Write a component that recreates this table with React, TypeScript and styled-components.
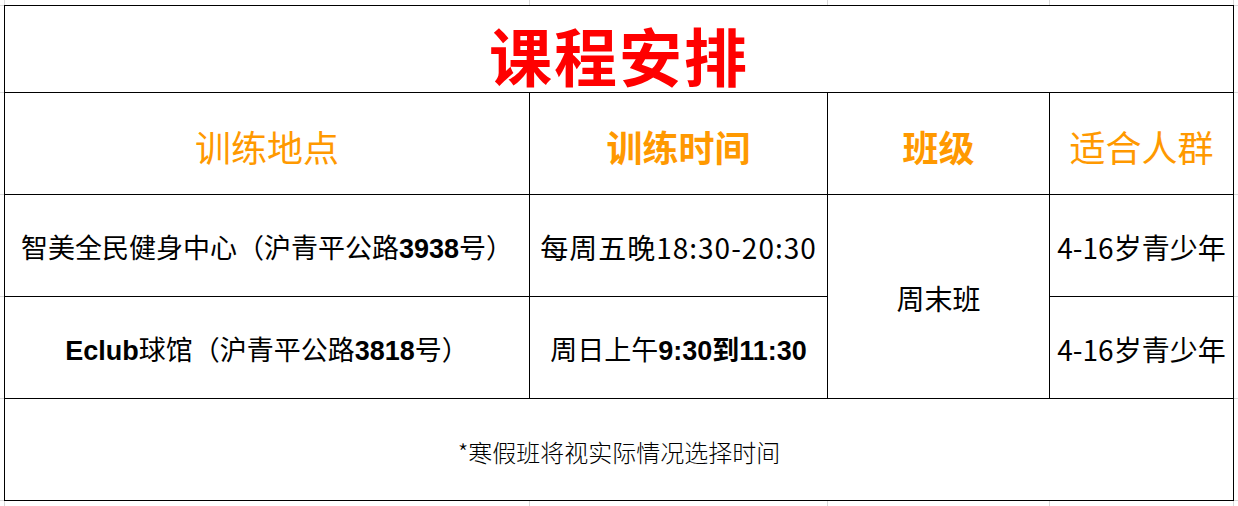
import React from "react";
import styled, { createGlobalStyle } from "styled-components";

const GlobalStyle = createGlobalStyle`
  html, body {
    margin: 0;
    padding: 0;
    background: #fff;
  }
  body {
    font-family: "Noto Sans CJK SC", "Liberation Sans", sans-serif;
    color: #000;
  }
`;

// faint spreadsheet gridlines that peek out round the bordered table
const colLines = [4, 529, 827, 1049, 1233];
const rowLines = [5, 92, 194, 296, 398, 500];
const gridImages = [
  ...colLines.map(() => "linear-gradient(#d9d9d9, #d9d9d9)"),
  ...rowLines.map(() => "linear-gradient(#d9d9d9, #d9d9d9)"),
].join(", ");
const gridSizes = [
  ...colLines.map(() => "1px 100%"),
  ...rowLines.map(() => "100% 1px"),
].join(", ");
const gridPositions = [
  ...colLines.map((x) => `${x}px 0`),
  ...rowLines.map((y) => `0 ${y}px`),
].join(", ");

const Sheet = styled.div`
  width: 1238px;
  height: 506px;
  box-sizing: border-box;
  padding: 5px 0 0 4px;
  background-color: #fff;
  background-image: ${gridImages};
  background-size: ${gridSizes};
  background-position: ${gridPositions};
  background-repeat: no-repeat;
`;

const Schedule = styled.div`
  display: grid;
  grid-template-columns: 524px 297px 221px 183px;
  grid-template-rows: 86px 101px 101px 101px 101px;
  gap: 1px;
  padding: 1px;
  width: max-content;
  background: #000;
`;

const Cell = styled.div<{ $span?: number; $rows?: number }>`
  background: #fff;
  display: flex;
  align-items: center;
  justify-content: center;
  white-space: nowrap;
  ${({ $span }) => ($span ? `grid-column: span ${$span};` : "")}
  ${({ $rows }) => ($rows ? `grid-row: span ${$rows};` : "")}
`;

const Title = styled.span`
  font-family: "Noto Sans CJK SC", sans-serif;
  font-weight: 700;
  font-size: 63px;
  color: #ff0000;
  letter-spacing: 2px;
  margin-top: 8px;
`;

const Heading = styled.span<{ $bold?: boolean }>`
  font-family: "Noto Sans CJK SC", sans-serif;
  font-size: 36px;
  font-weight: ${({ $bold }) => ($bold ? 700 : 400)};
  color: #ff9900;
  margin-top: 4px;
`;

const Body = styled.span<{ $song?: boolean }>`
  font-family: "Noto Sans CJK SC", sans-serif;
  font-size: ${({ $song }) => ($song ? 28 : 27)}px;
  color: #000;
  margin-top: 2px;
`;

const TimeText = styled(Body)`
  letter-spacing: 1px;
`;

const Num = styled.b`
  font-family: "Liberation Sans", Arial, sans-serif;
  font-weight: 700;
  letter-spacing: 0;
`;

const Note = styled.span`
  font-family: "Noto Sans CJK SC", sans-serif;
  font-size: 24px;
  font-weight: 300;
  color: #000;
  margin-top: 3px;
`;

export default function App() {
  return (
    <>
      <GlobalStyle />
      <Sheet>
        <Schedule>
          <Cell $span={4}>
            <Title>课程安排</Title>
          </Cell>

          <Cell>
            <Heading>训练地点</Heading>
          </Cell>
          <Cell>
            <Heading $bold>训练时间</Heading>
          </Cell>
          <Cell>
            <Heading $bold>班级</Heading>
          </Cell>
          <Cell>
            <Heading>适合人群</Heading>
          </Cell>

          <Cell>
            <Body>
              智美全民健身中心（沪青平公路<Num>3938</Num>号）
            </Body>
          </Cell>
          <Cell>
            <TimeText $song>每周五晚18:30-20:30</TimeText>
          </Cell>
          <Cell $rows={2}>
            <Body $song>周末班</Body>
          </Cell>
          <Cell>
            <Body $song>4-16岁青少年</Body>
          </Cell>

          <Cell>
            <Body>
              <Num>Eclub</Num>球馆（沪青平公路<Num>3818</Num>号）
            </Body>
          </Cell>
          <Cell>
            <Body>
              周日上午<Num>9:30</Num>
              <b>到</b>
              <Num>11:30</Num>
            </Body>
          </Cell>
          <Cell>
            <Body $song>4-16岁青少年</Body>
          </Cell>

          <Cell $span={4}>
            <Note>*寒假班将视实际情况选择时间</Note>
          </Cell>
        </Schedule>
      </Sheet>
    </>
  );
}
